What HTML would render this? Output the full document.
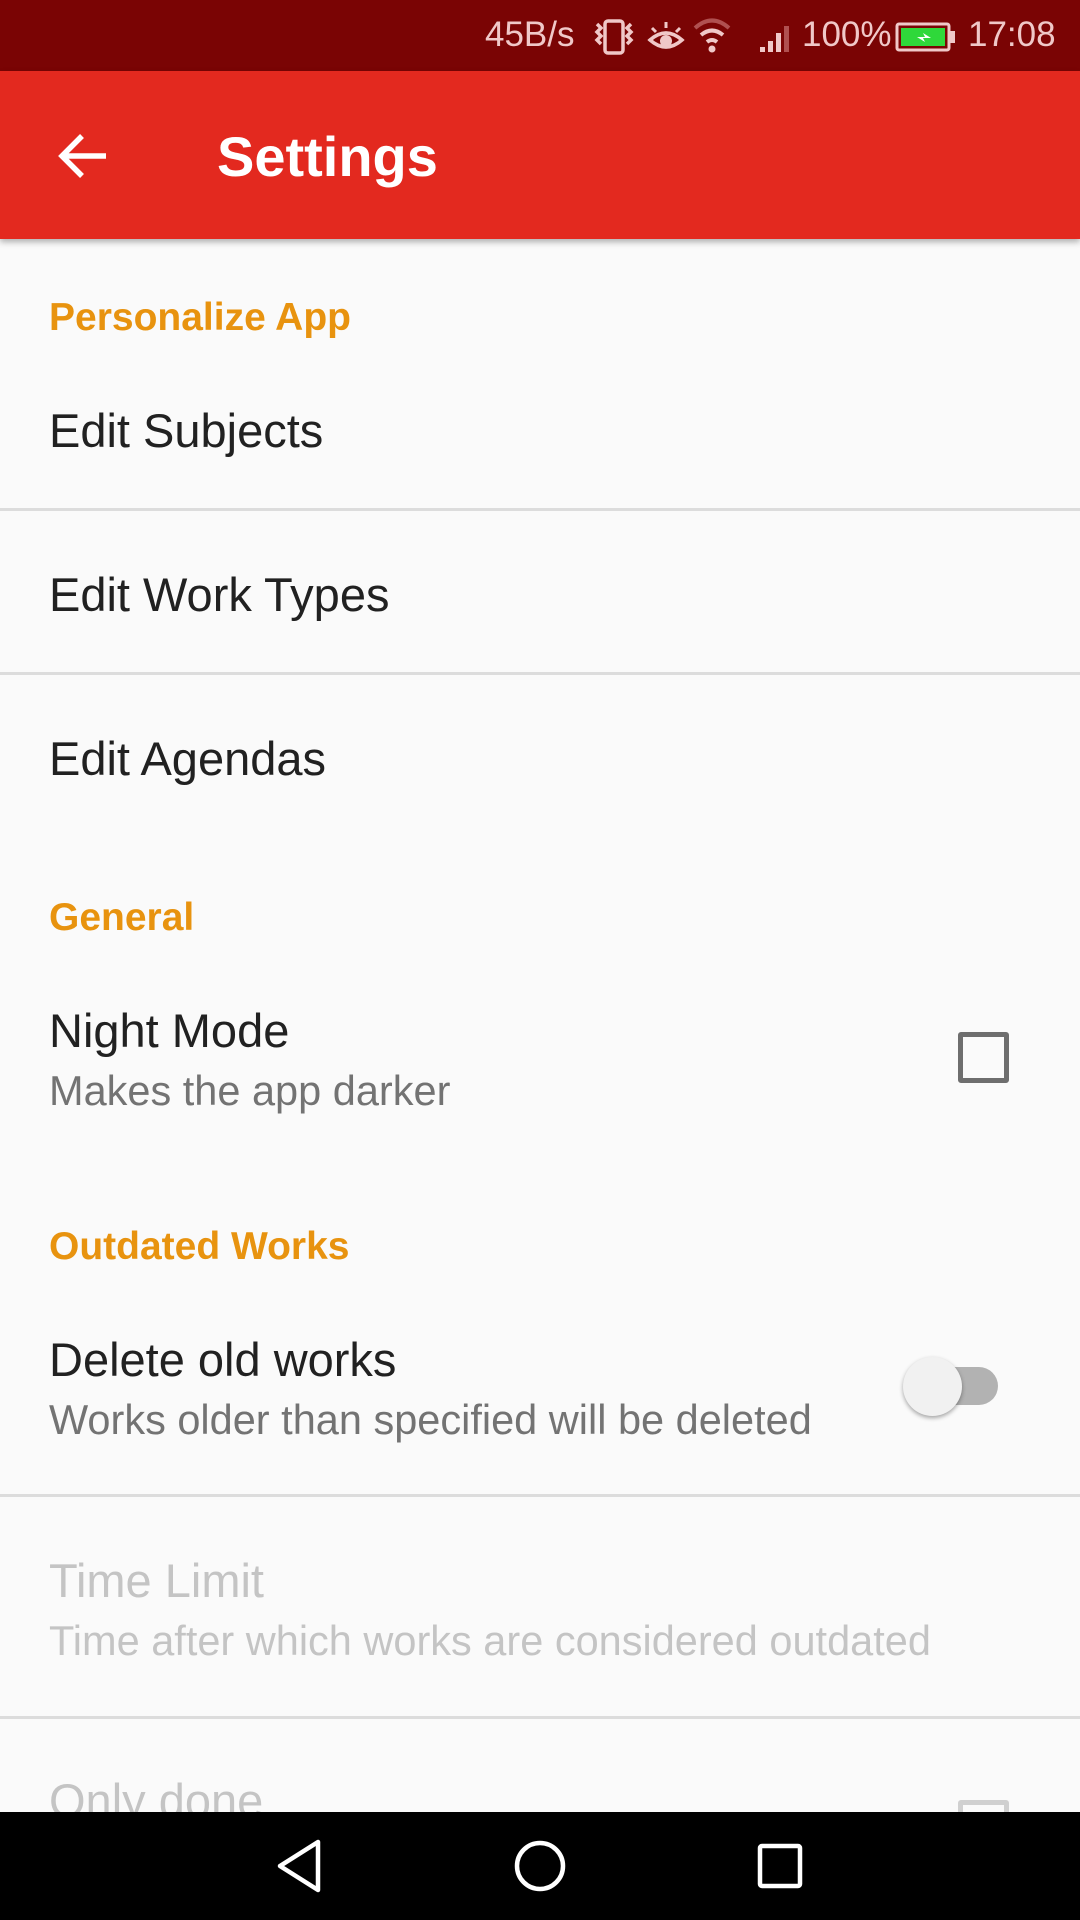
<!DOCTYPE html>
<html><head><meta charset="utf-8"><style>
*{margin:0;padding:0;box-sizing:border-box}
body{width:1080px;height:1920px;overflow:hidden;background:#fafafa;font-family:"Liberation Sans",sans-serif;position:relative}
.sb{position:absolute;top:0;left:0;width:1080px;height:71px;background:#7a0404;color:#f0c8c8;font-size:35px}
.tb{position:absolute;top:71px;left:0;width:1080px;height:168px;background:#e3291f;box-shadow:0 3px 6px rgba(0,0,0,.3)}
.t{position:absolute;white-space:nowrap}
.cat{color:#e8930f;font-size:39px;left:49px;font-weight:bold}
.ti{color:#212121;font-size:47px;left:49px}
.su{color:#737373;font-size:41.5px;left:49px}
.dis{color:#c4c4c4}
.dv{position:absolute;left:0;width:1080px;height:3px;background:#dcdcdc}
.nav{position:absolute;top:1812px;left:0;width:1080px;height:108px;background:#000}
</style></head><body>
<div class="sb">
<span class="t" style="left:485px;top:15px">45B/s</span>
<svg class="t" style="left:593px;top:18px" width="42" height="40" viewBox="0 0 42 40"><g fill="none" stroke="#f0c8c8" stroke-width="3.5"><rect x="12" y="3" width="18" height="32" rx="3"/><path d="M4 6l4 4-4 4 4 4-4 4 4 4M38 6l-4 4 4 4-4 4 4 4-4 4"/></g></svg>
<svg class="t" style="left:646px;top:18px" width="40" height="40" viewBox="0 0 40 40"><path d="M4 22q16-14 32 0q-16 14-32 0z" fill="none" stroke="#f0c8c8" stroke-width="3.5"/><circle cx="20" cy="23" r="6" fill="#f0c8c8"/><path d="M6 10l4 4M20 4v6M34 10l-4 4" stroke="#f0c8c8" stroke-width="3"/></svg>
<svg class="t" style="left:692px;top:18px" width="40" height="36" viewBox="0 0 40 36"><path d="M3 10q17-15 34 0" stroke="#b05050" stroke-width="4" fill="none"/><path d="M9 17q11-9 22 0M15 24q5-4 10 0" stroke="#f0c8c8" stroke-width="4" fill="none"/><circle cx="20" cy="31" r="3.5" fill="#f0c8c8"/></svg>
<svg class="t" style="left:758px;top:18px" width="36" height="36" viewBox="0 0 36 36"><g fill="#f0c8c8"><rect x="2" y="29" width="5" height="5"/><rect x="10" y="23" width="5" height="11"/><rect x="18" y="15" width="5" height="19"/><rect x="26" y="8" width="5" height="26" fill="#b05050"/></g></svg>
<span class="t" style="left:802px;top:15px">100%</span>
<svg class="t" style="left:895px;top:22px" width="62" height="30" viewBox="0 0 62 30"><rect x="2" y="2" width="52" height="26" rx="2" fill="none" stroke="#f0c8c8" stroke-width="3"/><rect x="6" y="6" width="44" height="18" fill="#2fd83a"/><rect x="55" y="9" width="5" height="12" fill="#f0c8c8"/><path d="M22 15h8l-2-4 8 5h-8l2 4z" fill="#fff"/></svg>
<span class="t" style="left:968px;top:15px">17:08</span>
</div>
<div class="tb">
<svg class="t" style="left:58px;top:62px" width="52" height="46" viewBox="0 0 52 46"><path d="M4 23h44M24 3L4 23l20 20" stroke="#fff" stroke-width="5.5" fill="none"/></svg>
<span class="t" style="left:217px;top:53px;color:#fff;font-size:56px;font-weight:bold">Settings</span>
</div>
<span class="t cat" style="top:296px">Personalize App</span>
<span class="t ti" style="top:403px">Edit Subjects</span>
<div class="dv" style="top:508px"></div>
<span class="t ti" style="top:567px">Edit Work Types</span>
<div class="dv" style="top:672px"></div>
<span class="t ti" style="top:731px">Edit Agendas</span>
<span class="t cat" style="top:896px">General</span>
<span class="t ti" style="top:1003px">Night Mode</span>
<span class="t su" style="top:1067px">Makes the app darker</span>
<div class="t" style="left:958px;top:1032px;width:51px;height:51px;border:5px solid #6e6e6e;border-radius:3px"></div>
<span class="t cat" style="top:1225px">Outdated Works</span>
<span class="t ti" style="top:1332px">Delete old works</span>
<span class="t su" style="top:1396px">Works older than specified will be deleted</span>
<div class="t" style="left:910px;top:1367px;width:88px;height:38px;border-radius:19px;background:#b2b2b2"></div>
<div class="t" style="left:903px;top:1357px;width:59px;height:59px;border-radius:50%;background:#f1f1f1;box-shadow:0 2px 4px rgba(0,0,0,.35)"></div>
<div class="dv" style="top:1494px"></div>
<span class="t ti dis" style="top:1553px">Time Limit</span>
<span class="t su dis" style="top:1617px">Time after which works are considered outdated</span>
<div class="dv" style="top:1716px"></div>
<span class="t ti dis" style="top:1773px">Only done</span>
<div class="t" style="left:958px;top:1800px;width:51px;height:51px;border:5px solid #d0d0d0;border-radius:3px"></div>
<div class="nav">
<svg class="t" style="left:270px;top:24px" width="60" height="60" viewBox="0 0 60 60"><path d="M48 6v48L10 30z" fill="none" stroke="#fff" stroke-width="4.5" stroke-linejoin="round"/></svg>
<svg class="t" style="left:510px;top:24px" width="60" height="60" viewBox="0 0 60 60"><circle cx="30" cy="30" r="23" fill="none" stroke="#fff" stroke-width="4.5"/></svg>
<svg class="t" style="left:750px;top:24px" width="60" height="60" viewBox="0 0 60 60"><rect x="10" y="10" width="40" height="40" rx="2" fill="none" stroke="#fff" stroke-width="4.5"/></svg>
</div>
</body></html>
